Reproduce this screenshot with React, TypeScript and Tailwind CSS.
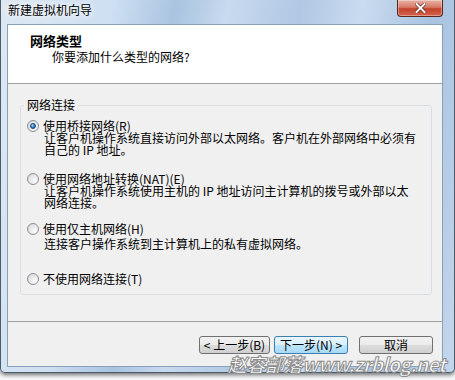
import React from "react";

function Radio({ checked }: { checked?: boolean }) {
  return (
    <div className="w-[12px] h-[12px] shrink-0 rounded-full border border-[#8c8f93] bg-[radial-gradient(circle_at_70%_70%,#fbfbfb_0%,#e6e6e6_55%,#cfd1d3_100%)] flex items-center justify-center">
      {checked && (
        <div className="w-[6px] h-[6px] rounded-full bg-[radial-gradient(circle_at_35%_35%,#b9e0fb_0%,#3f87c8_45%,#10417e_100%)] border border-[#16457f]" />
      )}
    </div>
  );
}

function Item({
  checked,
  title,
  lines,
  descMt = 0,
  className = "",
}: {
  checked?: boolean;
  title: string;
  lines?: string[];
  descMt?: number;
  className?: string;
}) {
  return (
    <div className={"flex pl-[6px] " + className}>
      <Radio checked={checked} />
      <div className="ml-[4px] leading-[12px] whitespace-nowrap">
        <div>{title}</div>
        {lines && (
          <div className={"pl-[1px] " + (descMt === 3 ? "mt-[3px]" : "")}>
            {lines.map((l, i) => (
              <div key={i}>{l}</div>
            ))}
          </div>
        )}
      </div>
    </div>
  );
}

export default function App() {
  return (
    <div className="w-[455px] h-[380px] bg-[#f7f8fa] relative overflow-hidden font-['Noto_Sans_CJK_SC','Noto_Sans',sans-serif] text-[12px] text-black">
      {/* window */}
      <div className="h-[373px] flex flex-col border border-t-0 border-[#4d5a68] rounded-b-[5px] shadow-[0_2px_4px_rgba(0,0,0,0.55)] bg-[linear-gradient(100deg,#dde8f4_0%,#cddff1_22%,#a9c3e0_34%,#c8daee_44%,#b0c8e3_58%,#c9dbef_70%,#a8c2df_84%,#c4d7ec_100%)]">
        {/* title bar */}
        <div className="h-[24px] flex items-start justify-between">
          <div className="pl-[7px] pt-[3px] leading-[14px] [text-shadow:0_0_5px_#ffffff,0_0_8px_#ffffff]">
            新建虚拟机向导
          </div>
          <div className="mr-[11px] w-[46px] h-[17px] rounded-b-[4px] border border-t-0 border-[#5a2620] bg-[linear-gradient(180deg,#e8b2a6_0%,#d77a66_45%,#c3412b_55%,#d4644d_100%)] flex items-center justify-center shadow-[inset_0_0_0_1px_rgba(255,255,255,0.35)]">
            <svg width="11" height="10" viewBox="0 0 11 10">
              <path d="M1.5 1 L9.5 9 M9.5 1 L1.5 9" stroke="#4a1a14" strokeWidth="3.2" strokeLinecap="square" />
              <path d="M1.5 1 L9.5 9 M9.5 1 L1.5 9" stroke="#ffffff" strokeWidth="2" strokeLinecap="square" />
            </svg>
          </div>
        </div>
        {/* client row */}
        <div className="flex pl-[6px] pr-[11px]">
          <div className="w-[436px] h-[343px] border border-[#8aa0b8] bg-[#f0f0f0] flex flex-col">
            {/* header */}
            <div className="h-[59px] bg-white border-b border-[#a0a0a0] pl-[22px] pt-[9px]">
              <div className="text-[13px] font-bold leading-[14px]">网络类型</div>
              <div className="pl-[22px] mt-[2px] leading-[14px]">你要添加什么类型的网络?</div>
            </div>
            {/* body */}
            <div className="h-[238px] pt-[14px] pl-[12px] border-b border-[#a0a0a0]">
              <fieldset className="w-[412px] border border-[#d5dfe5] rounded-[3px] pb-[9px]">
                <legend className="ml-[3px] px-[3px] leading-[14px]">网络连接</legend>
                <Item
                  className="mt-[8px]"
                  checked
                  title="使用桥接网络(R)"
                  lines={["让客户机操作系统直接访问外部以太网络。客户机在外部网络中必须有", "自己的 IP 地址。"]}
                />
                <Item
                  className="mt-[17px]"
                  title="使用网络地址转换(NAT)(E)"
                  lines={["让客户机操作系统使用主机的 IP 地址访问主计算机的拨号或外部以太", "网络连接。"]}
                />
                <Item
                  className="mt-[14px]"
                  title="使用仅主机网络(H)"
                  descMt={3}
                  lines={["连接客户操作系统到主计算机上的私有虚拟网络。"]}
                />
                <Item className="mt-[23px]" title="不使用网络连接(T)" />
              </fieldset>
            </div>
            {/* footer */}
            <div className="flex-1 flex justify-end items-start pt-[14px] pr-[9px]">
              <button className="w-[71px] h-[18px] rounded-[3px] border border-[#707070] bg-[linear-gradient(180deg,#f2f2f2_0%,#ebebeb_48%,#dddddd_52%,#cfcfcf_100%)] leading-[14px] flex items-center justify-center">
                &lt; 上一步(B)
              </button>
              <button className="ml-[4px] w-[74px] h-[18px] rounded-[3px] border border-[#3c7fb1] bg-[linear-gradient(180deg,#eaf6fd_0%,#d9f0fc_48%,#bee6fd_52%,#a7d9f5_100%)] leading-[14px] flex items-center justify-center">
                下一步(N) &gt;
              </button>
              <button className="ml-[11px] w-[74px] h-[18px] rounded-[3px] border border-[#707070] bg-[linear-gradient(180deg,#f2f2f2_0%,#ebebeb_48%,#dddddd_52%,#cfcfcf_100%)] leading-[14px] flex items-center justify-center">
                取消
              </button>
            </div>
          </div>
        </div>
      </div>
      {/* watermark */}
      <div className="absolute left-[228px] top-[353px] text-[19px] font-bold italic leading-[22px] text-white whitespace-nowrap [-webkit-text-stroke:1px_#8c8c8c] tracking-[-0.5px]">
        赵容部落www.zrblog.net
      </div>
    </div>
  );
}
